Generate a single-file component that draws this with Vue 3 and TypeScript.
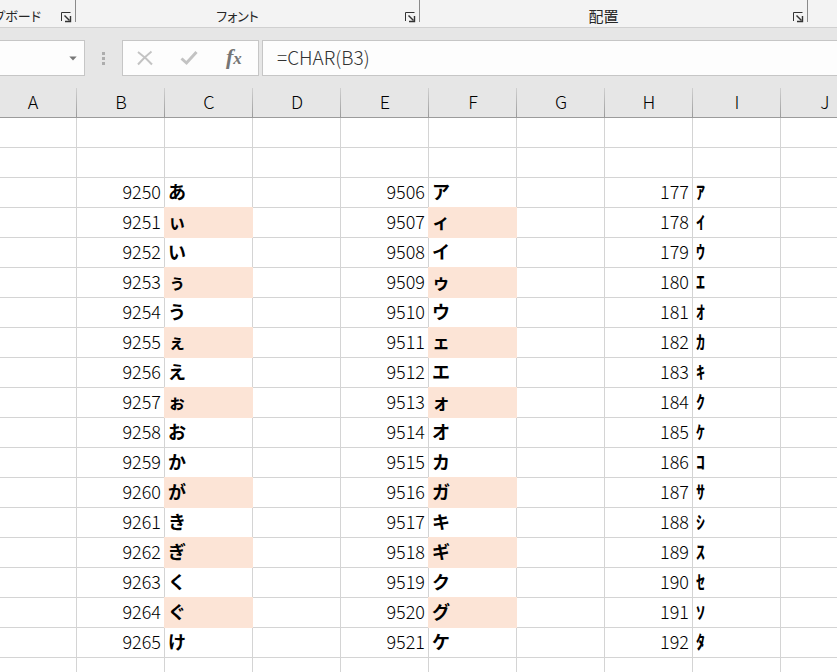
<script setup lang="ts">
import { ref } from 'vue'

interface Cell {
  text: string
  kind: 'number' | 'kana' | 'empty'
  filled: boolean
}

const columns = ['A', 'B', 'C', 'D', 'E', 'F', 'G', 'H', 'I', 'J']
const groups = [
  { label: 'クリップボード', name: 'clipboard' },
  { label: 'フォント', name: 'font' },
  { label: '配置', name: 'alignment' },
]

const hiragana = [...'あぃいぅうぇえぉおかがきぎくぐけ']
const katakana = [...'アィイゥウェエォオカガキギクグケ']
const halfWidth = [...'ｱｲｳｴｵｶｷｸｹｺｻｼｽｾｿﾀ']
const filledRows = [1, 3, 5, 7, 10, 12, 14]

const formula = ref('=CHAR(B3)')
const nameBox = ref('')

const empty = (): Cell => ({ text: '', kind: 'empty', filled: false })
const num = (value: number): Cell => ({ text: String(value), kind: 'number', filled: false })
const kana = (text: string, filled = false): Cell => ({ text, kind: 'kana', filled })
const emptyRow = (): Cell[] => columns.map(empty)

const rows: Cell[][] = [
  emptyRow(),
  emptyRow(),
  ...hiragana.map((h, i) => {
    const filled = filledRows.includes(i)
    return [
      empty(),
      num(9250 + i),
      kana(h, filled),
      empty(),
      num(9506 + i),
      kana(katakana[i], filled),
      empty(),
      num(177 + i),
      kana(halfWidth[i]),
      empty(),
    ]
  }),
  emptyRow(),
]
</script>

<template>
  <div class="app">
    <div class="ribbon">
      <div v-for="group in groups" :key="group.name" class="group" :class="group.name">
        <span class="group-label">{{ group.label }}</span>
        <button class="launcher" type="button" :aria-label="group.label">
          <svg width="11" height="11" viewBox="0 0 11 11" fill="none" stroke="#333" stroke-width="1">
            <path d="M0.5 9V0.5H9.5" />
            <path d="M3.5 3.5L8.5 8.5" stroke-width="1.4" />
            <path d="M9.5 4V9.5H4" stroke-width="1.4" />
          </svg>
        </button>
      </div>
    </div>

    <div class="formula-bar">
      <div class="name-box">
        <input v-model="nameBox" type="text" aria-label="名前ボックス" />
        <button type="button" aria-label="名前の一覧">
          <svg width="8" height="5" viewBox="0 0 8 5"><path d="M0.3 0.5H7.7L4 4.5Z" fill="#777" /></svg>
        </button>
      </div>
      <div class="grip"><i></i><i></i><i></i></div>
      <div class="actions">
        <button type="button" aria-label="キャンセル">
          <svg width="18" height="16" viewBox="0 0 18 16" fill="none" stroke="#c3c3c3" stroke-width="2">
            <path d="M2 2C6 5 12 10 16 14.5M15.5 1.5C11 5 6 10 2 14.5" />
          </svg>
        </button>
        <button type="button" aria-label="入力">
          <svg width="18" height="16" viewBox="0 0 18 16" fill="none" stroke="#c3c3c3" stroke-width="3">
            <path d="M1.5 8.5L6.5 13L16.5 2" />
          </svg>
        </button>
        <button class="fx" type="button" aria-label="関数の挿入"><span>f</span><small>x</small></button>
      </div>
      <input v-model="formula" class="formula" type="text" aria-label="数式バー" />
    </div>

    <div class="sheet">
      <table>
        <colgroup>
          <col v-for="c in columns" :key="c" :class="{ first: c === 'A' }" />
        </colgroup>
        <thead>
          <tr>
            <th v-for="c in columns" :key="c" scope="col">{{ c }}</th>
          </tr>
        </thead>
        <tbody>
          <tr v-for="(row, r) in rows" :key="r">
            <td v-for="(cell, c) in row" :key="c" :class="[cell.kind, { filled: cell.filled }]">{{ cell.text }}</td>
          </tr>
        </tbody>
      </table>
    </div>
  </div>
</template>

<style>
body {
  margin: 0;
  background: #fff;
}
</style>

<style scoped>
.app {
  height: 100vh;
  display: flex;
  flex-direction: column;
  overflow: hidden;
  font-family: 'Noto Sans CJK JP', 'Noto Sans', sans-serif;
  color: #000;
}

button {
  padding: 0;
  border: 0;
  background: none;
}

.ribbon {
  display: flex;
  flex: none;
  height: 27px;
  background: #f3f3f3;
  border-bottom: 1px solid #d0d0d0;
}

.group {
  display: flex;
  align-items: center;
  box-sizing: border-box;
  height: 22px;
  padding-right: 3px;
  border-right: 1px solid #8a8a8a;
}

.group-label {
  flex: 1;
  padding-top: 10px;
  font-size: 13px;
  line-height: 22px;
  font-feature-settings: 'palt';
  text-align: center;
  white-space: nowrap;
  color: #262626;
}

.launcher {
  display: flex;
  margin-top: 12px;
}

.clipboard {
  width: 76px;
  justify-content: flex-end;
}

.clipboard .group-label {
  flex: none;
  padding-right: 20px;
}

.font {
  width: 344px;
}

.alignment {
  width: 388px;
}

.font .group-label,
.alignment .group-label {
  padding-right: 6px;
}

.alignment .group-label {
  font-size: 15px;
}

.formula-bar {
  display: flex;
  flex: none;
  padding: 12px 0;
  background: #e6e6e6;
}

.name-box,
.actions,
.formula {
  box-sizing: border-box;
  height: 36px;
  border: 1px solid #c6c6c6;
  background: #fdfdfd;
}

.name-box {
  display: flex;
  align-items: center;
  width: 85px;
  padding-right: 7px;
  border-left: 0;
}

.name-box input {
  flex: 1;
  min-width: 0;
  border: 0;
  outline: 0;
  background: none;
}

.name-box button {
  display: flex;
}

.grip {
  display: flex;
  flex-direction: column;
  align-items: center;
  justify-content: center;
  gap: 2px;
  width: 37px;
}

.grip i {
  width: 3px;
  height: 3px;
  background: #adadad;
}

.actions {
  display: flex;
  align-items: center;
  width: 137px;
  padding-right: 2px;
}

.actions button {
  display: flex;
  flex: 1;
  align-items: center;
  justify-content: center;
}

.actions .fx {
  align-items: baseline;
  font: italic bold 22px/26px 'Liberation Serif', serif;
  color: #757575;
}

.fx small {
  font-size: 17px;
}

.formula {
  flex: 1;
  min-width: 0;
  margin-left: 3px;
  padding: 0 14px 3px;
  border-right: 0;
  outline: 0;
  font: 300 19px/31px 'Noto Sans CJK JP', sans-serif;
  color: #333;
}

.sheet {
  flex: 1;
  min-height: 0;
  overflow: hidden;
}

table {
  width: 869px;
  table-layout: fixed;
  border-collapse: separate;
  border-spacing: 0;
  font-size: 18px;
  line-height: 27px;
}

col {
  width: 88px;
}

col.first {
  width: 77px;
}

th,
td {
  box-sizing: border-box;
  height: 30px;
  padding: 0 0 2px;
  font-weight: 300;
  white-space: nowrap;
}

th {
  border-bottom: 1px solid #9b9b9b;
  background: linear-gradient(#d0d0d0, #9b9b9b) right / 1px 100% no-repeat #e6e6e6;
  text-align: center;
}

th:first-child {
  padding-right: 11px;
}

td {
  border-right: 1px solid #d4d4d4;
  border-bottom: 1px solid #d4d4d4;
}

.number {
  padding-right: 3px;
  text-align: right;
}

.kana {
  padding-left: 3px;
  font-weight: 700;
}

.filled {
  border-color: #fce4d6;
  background: #fce4d6;
  box-shadow: -1px 0 #fce4d6, 0 -1px #fce4d6, -1px -1px #fce4d6;
}
</style>
